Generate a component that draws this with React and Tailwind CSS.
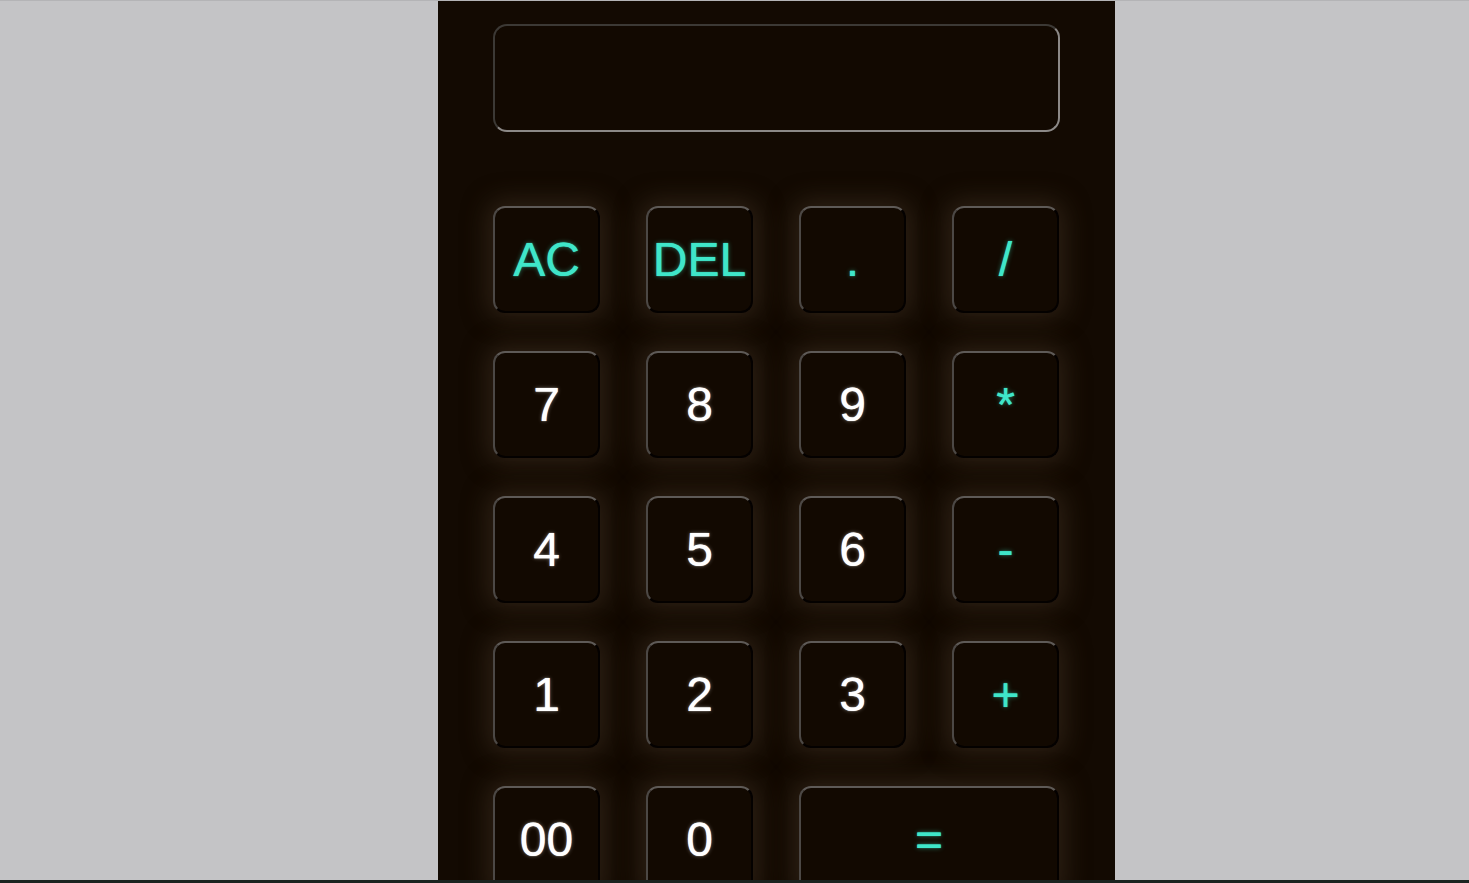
const KEYS = [
  { label: "AC", op: true },
  { label: "DEL", op: true },
  { label: ".", op: true },
  { label: "/", op: true },
  { label: "7" },
  { label: "8" },
  { label: "9" },
  { label: "*", op: true },
  { label: "4" },
  { label: "5" },
  { label: "6" },
  { label: "-", op: true },
  { label: "1" },
  { label: "2" },
  { label: "3" },
  { label: "+", op: true },
  { label: "00" },
  { label: "0" },
  { label: "=", op: true, wide: true },
];

function Key({ label, op, wide }) {
  return (
    <button
      className={`h-[107px] ${wide ? "col-span-2" : ""} flex items-center justify-center rounded-[12px] border-2 border-t-[#5e5a57] border-l-[#4c4845] border-b-[#040100] border-r-[#040100] bg-[#120901] shadow-[0_0_24px_6px_rgba(62,46,32,0.6)] text-[48px] leading-none ${
        op
          ? "text-[#3fe6c9] [text-shadow:0_0_1px_#3fe6c9,0_0_5px_rgba(63,230,201,0.45)]"
          : "text-white [text-shadow:0_0_1px_#fff,0_0_4px_rgba(255,255,255,0.35)]"
      }`}
    >
      {label}
    </button>
  );
}

export default function App() {
  return (
    <div
      className="h-[883px] w-full flex flex-col overflow-hidden"
      style={{ fontFamily: '"Liberation Sans", Arial, sans-serif' }}
    >
      <div className="h-[880px] bg-[#c4c4c6] border-t border-[#b4b4b6] overflow-hidden">
        <div className="ml-[438px] w-[677px] h-full bg-[#130a02] pl-[55px] pt-[23px]">
          {/* Display */}
          <div className="h-[108px] w-[567px] rounded-[14px] border-2 border-t-[#3c3935] border-l-[#3c3935] border-b-[#8c8987] border-r-[#8c8987] bg-[#120901]" />

          {/* Keys */}
          <div className="mt-[74px] grid grid-cols-[repeat(4,107px)] gap-x-[46px] gap-y-[38px]">
            {KEYS.map((k) => (
              <Key key={k.label} {...k} />
            ))}
          </div>
        </div>
      </div>
      <div className="h-[3px] bg-[#1b2420]" />
    </div>
  );
}
